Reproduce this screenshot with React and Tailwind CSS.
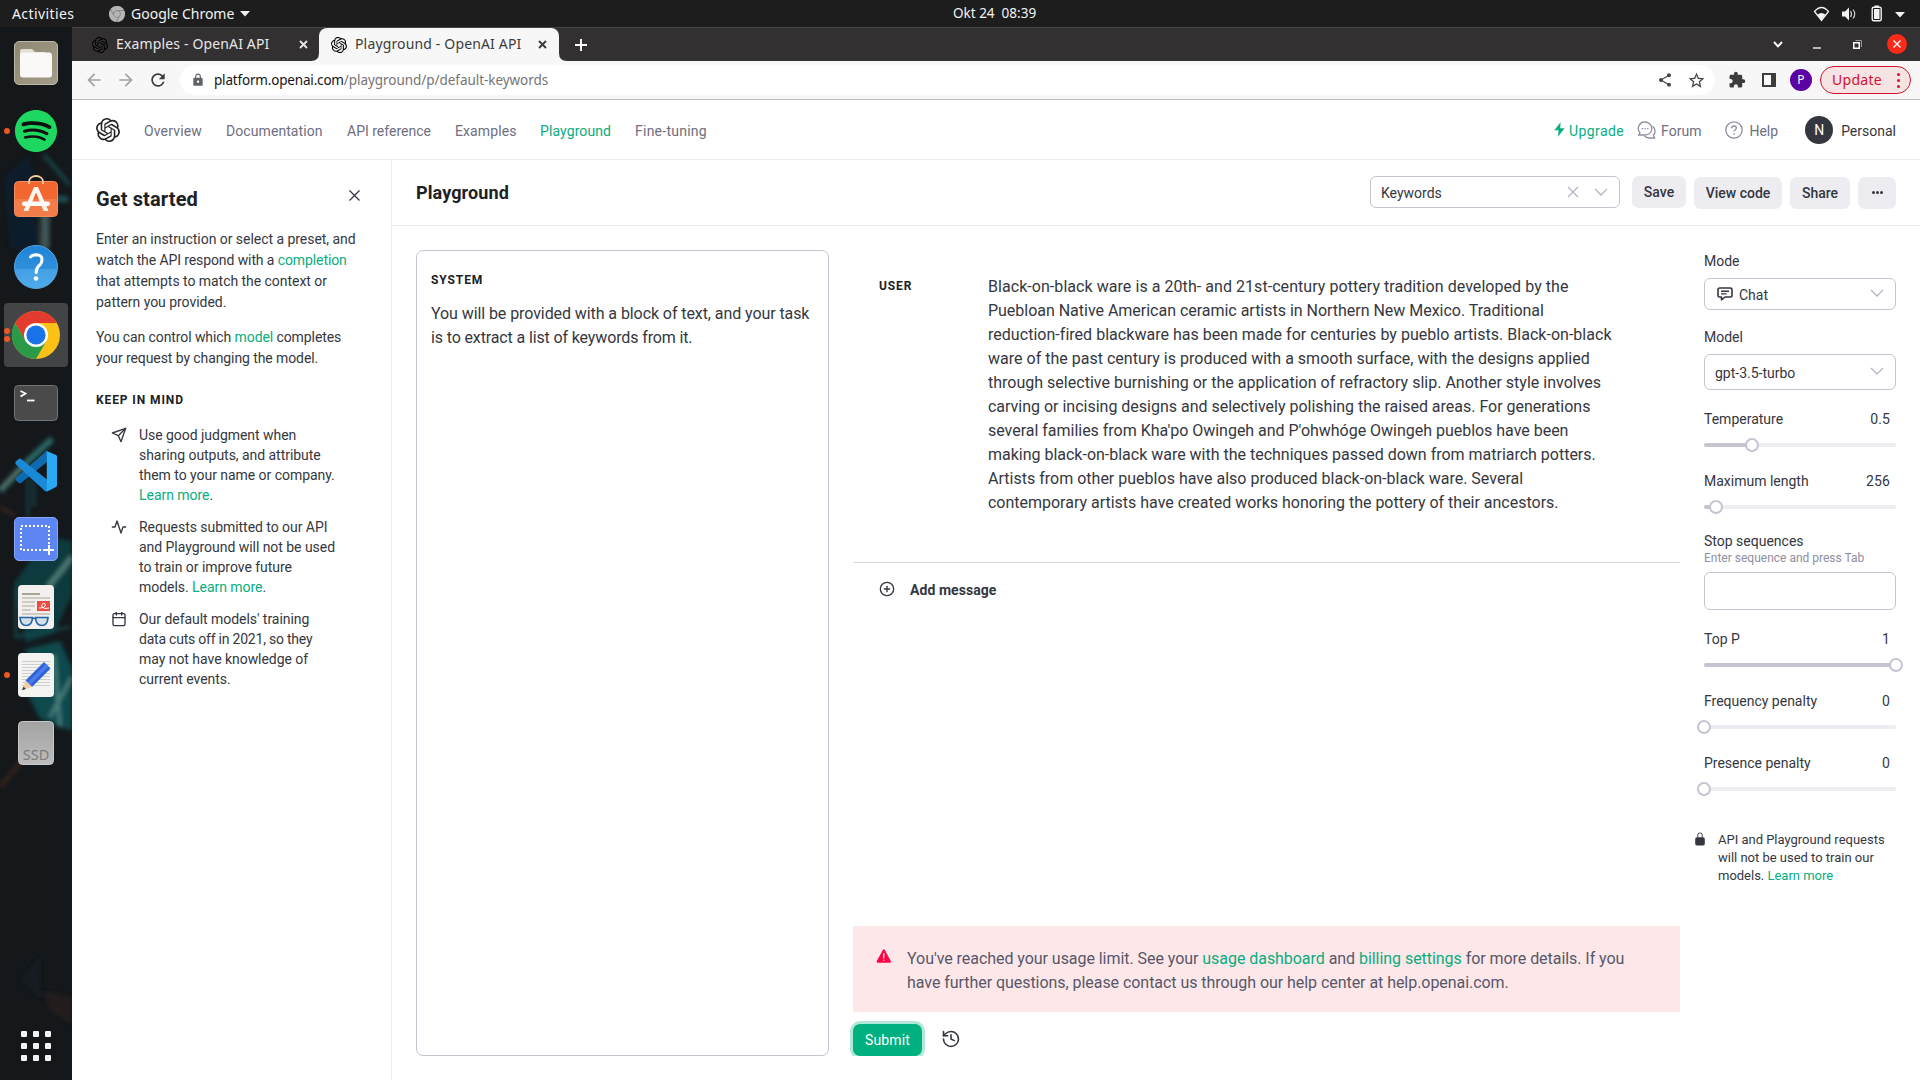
import React from "react";
import { SiOpenai, SiGooglechrome, SiSpotify } from "react-icons/si";
import { MdExtension, MdShare, MdStarBorder, MdLock, MdRefresh, MdArrowBack, MdArrowForward } from "react-icons/md";
import { FiSend, FiActivity, FiCalendar, FiPlusCircle } from "react-icons/fi";
import { IoWarning, IoLockClosed } from "react-icons/io5";
import { History } from "lucide-react";

function DockSlot({ dots = [], active = false, children }) {
  return (
    <svg width="72" height="64" viewBox="0 0 72 64" className="block shrink-0">
      {active && <rect x="4" y="0" width="64" height="64" rx="4" fill="#424446" />}
      {children}
      {dots.map((y) => (
        <circle key={y} cx="7" cy={y} r="3" fill="#ee5622" />
      ))}
    </svg>
  );
}

function Wallpaper() {
  return (
    <svg width="72" height="1053" viewBox="0 0 72 1053" className="absolute inset-0">
      <defs>
        <filter id="soft" x="-20%" y="-20%" width="140%" height="140%">
          <feGaussianBlur stdDeviation="2.2" />
        </filter>
      </defs>
      <rect width="72" height="1053" fill="#14181b" />
      <g filter="url(#soft)" fill="none">
        <path d="M44 128 L70 158" stroke="#1c4f52" strokeWidth="3" />
        <path d="M45 160 V222" stroke="#3f5754" strokeWidth="9" />
        <path d="M20 172 H68" stroke="#1c5356" strokeWidth="6" />
        <path d="M4 150 L30 128 L40 230 L10 220 Z" fill="#101f2a" />
        <path d="M0 464 L26 436 L52 412" stroke="#2a6a6a" strokeWidth="6" />
        <path d="M0 462 L24 438" stroke="#6d7a6c" strokeWidth="2" />
        <path d="M28 450 V490 M34 450 V480" stroke="#1d3f43" strokeWidth="3" />
        <path d="M14 556 L48 510 L72 514 L72 568 L54 606 L26 616 Z" fill="#0e3a3e" />
        <path d="M48 560 L72 530" stroke="#4f7d77" strokeWidth="5" />
        <path d="M16 560 V610 L70 600" stroke="#14565a" strokeWidth="2" />
        <path d="M26 622 L60 614 L72 640 L72 704 L40 692 L24 660 Z" fill="#0d4a4d" />
        <path d="M54 628 L60 700 M72 650 L50 690" stroke="#4b8580" strokeWidth="3" />
        <path d="M0 480 L14 488" stroke="#5b3028" strokeWidth="2" />
        <path d="M0 760 L50 700" stroke="#33201f" strokeWidth="5" />
        <path d="M20 952 L40 930 V972 Z" fill="#171b22" />
        <path d="M44 964 L72 970 V998 L50 984 Z" fill="#241b1d" />
      </g>
    </svg>
  );
}

function Dock() {
  return (
    <aside className="relative w-[72px] shrink-0 overflow-hidden bg-[#14181b]">
      <Wallpaper />
      <div className="relative flex h-full flex-col gap-1 pt-1">
        <DockSlot>
          <defs>
            <linearGradient id="files" x1="0" y1="0" x2="1" y2="1">
              <stop offset="0" stopColor="#8f8872" />
              <stop offset="1" stopColor="#a39c88" />
            </linearGradient>
          </defs>
          <rect x="14.5" y="10.5" width="43" height="43" rx="4.5" fill="url(#files)" stroke="#bdb7a6" />
          <path d="M20 20 q0-2 2-2 h10 l3 3 h10 v8 H20 Z" fill="#e3dfd3" />
          <rect x="20" y="21.5" width="32" height="25" rx="3" fill="#faf9f7" />
        </DockSlot>
        <DockSlot dots={[32]}>
          <circle cx="36" cy="32" r="20" fill="#0c1110" />
          <SiSpotify x="15" y="11" size={42} color="#1ed760" />
        </DockSlot>
        <DockSlot>
          <rect x="14.5" y="14.5" width="43" height="35" rx="4" fill="#f2662f" stroke="#f58b5f" />
          <path d="M15 32 h42 v14 q0 3-3 3 H18 q-3 0-3-3 Z" fill="#f47c48" />
          <path d="M29 17 v-2.500 a7 5.500 0 0 1 14 0 v2.500" fill="none" stroke="#f5cfa4" strokeWidth="1.800" />
          <path d="M34 20 h4 l10.500 24 h-4.800 L36 25.500 L28.300 44 h-4.800 Z" fill="#fdf4ee" />
          <rect x="22" y="34.500" width="28" height="4.500" rx="2.200" fill="#fff" />
        </DockSlot>
        <DockSlot>
          <defs>
            <linearGradient id="help" x1="0" y1="0" x2="0" y2="1">
              <stop offset="0" stopColor="#1f84d8" />
              <stop offset=".54" stopColor="#2f8fdc" />
              <stop offset=".55" stopColor="#44a0e4" />
              <stop offset="1" stopColor="#4fabea" />
            </linearGradient>
          </defs>
          <circle cx="36" cy="32" r="21.500" fill="url(#help)" stroke="#58a6e2" />
          <path d="M30.500 22 Q32 19.800 36.200 19.800 Q42.300 20 42 25 Q41.800 28.500 38.700 31 Q36.200 33 36.200 37.500" fill="none" stroke="#fff" strokeWidth="3" strokeLinecap="round" />
          <circle cx="36" cy="43.500" r="2.300" fill="#fff" />
        </DockSlot>
        <DockSlot dots={[28, 36]} active>
          <circle cx="36" cy="32" r="24" fill="#fbc116" />
          <path d="M36 20 H56.800 A24 24 0 0 0 15.200 20 L25.600 38 Z" fill="#e33b2e" />
          <path d="M15.200 20 A24 24 0 0 0 36 56 L46.400 38 L36 44 L25.600 38 Z" fill="#2a9a48" />
          <circle cx="36" cy="32" r="12" fill="#fff" />
          <circle cx="36" cy="32" r="9.600" fill="#1a73e8" />
        </DockSlot>
        <DockSlot>
          <rect x="14.500" y="14.500" width="43" height="35" rx="4" fill="#4a4a4a" stroke="#747474" />
          <path d="M20.500 20 L25.500 22.500 L20.500 25.500" fill="none" stroke="#fff" strokeWidth="1.800" />
          <path d="M27 29.500 h7.500" stroke="#fff" strokeWidth="1.800" />
        </DockSlot>
        <DockSlot>
          <path d="M15.500 41 L19 44 Q20 44.800 21 44 L47 23 V11.500 L15.800 39 Q15 40 15.500 41 Z" fill="#0f69ae" />
          <path d="M15.500 25 Q15 23 16 22.300 L19 19.800 Q20 19.200 21 20 L47 40.500 V52.500 L45 52 Z" fill="#1b8ad6" />
          <path d="M45.500 11.500 L56 16 Q57 16.500 57 18 V46 Q57 47.500 56 48 L46.500 52.800 Q46.800 52 46.800 50 V14 Q46.800 12 45.500 11.500 Z" fill="#2aaaf2" />
        </DockSlot>
        <DockSlot>
          <rect x="14.500" y="10.500" width="43" height="43" rx="4.500" fill="#5d86f2" stroke="#88a5f5" />
          <rect x="21" y="19" width="28" height="24" fill="none" stroke="#fff" strokeWidth="2" strokeDasharray="2 2" />
          <rect x="44" y="39" width="10" height="9" fill="#5d86f2" />
          <path d="M49 38 v10 M44 43 h10" stroke="#fff" strokeWidth="2" />
        </DockSlot>
        <DockSlot>
          <rect x="18" y="10" width="36" height="44" rx="4" fill="#f1f0ee" />
          <path d="M22 19 h18" stroke="#aaa594" strokeWidth="2" />
          <path d="M22 23 h28 M22 27 h13 M22 31 h13 M22 35 h9 M22 39 h28" stroke="#c3bfb4" strokeWidth="1.600" />
          <rect x="37" y="26" width="13" height="10" fill="#ec4c44" />
          <path d="M39 33 q6 0 6.500-3 q0-2-2-1.500 q-3 1-1.500 3.500 q2 2.500 7 1" fill="none" stroke="#fff" strokeWidth="1" />
          <g fill="#d3dfe9" stroke="#2765a4" strokeWidth="1.700">
            <path d="M20 42.500 h12.500 q-.3 8-6.500 8 q-5.500 0-6-8 Z" />
            <path d="M35.500 42.500 h12.500 q-.5 8-6 8 q-6.200 0-6.500-8 Z" />
            <path d="M32 44 q2-1.500 4 0" fill="none" />
          </g>
        </DockSlot>
        <DockSlot dots={[32]}>
          <rect x="18" y="10" width="36" height="44" rx="4" fill="#f3f3f2" />
          <path d="M22 18.500 h28 M22 21.500 h28 M22 24.500 h28 M22 27.500 h28 M22 30.500 h28 M22 33.500 h28 M22 36.500 h28 M22 39.500 h28 M22 42.500 h28" stroke="#cfcfcd" strokeWidth="1" />
          <path d="M44 19 L50.500 25.500 L32 44 L25.500 37.500 Z" fill="#2f62d8" />
          <path d="M46 21 L48.500 23.500 L30 42 L27.500 39.500 Z" fill="#4a7cec" />
          <path d="M25.500 37.500 L32 44 L22.500 47 Z" fill="#f3cfa5" />
          <path d="M23.500 43.500 L25.800 46 L22 47.200 Z" fill="#333" />
        </DockSlot>
        <DockSlot>
          <defs>
            <linearGradient id="ssd" x1="0" y1="0" x2="0" y2="1">
              <stop offset="0" stopColor="#a2a2a2" />
              <stop offset="1" stopColor="#bdbdbd" />
            </linearGradient>
          </defs>
          <rect x="18.500" y="10.500" width="35" height="43" rx="4" fill="url(#ssd)" stroke="#c9c9c9" />
          <text x="36" y="48.500" textAnchor="middle" fontSize="14.500" fill="#7c7c7c" fontFamily="'Noto Sans', sans-serif">SSD</text>
        </DockSlot>
        <div className="mt-auto mb-[19px] ml-[21px] grid w-[30px] grid-cols-3 gap-[6px]">
          {[0, 1, 2, 3, 4, 5, 6, 7, 8].map((i) => (
            <span key={i} className="size-[6px] rounded-[1px] bg-[#f2f2f0]" />
          ))}
        </div>
      </div>
    </aside>
  );
}

function SystemBar() {
  return (
    <div className="grid h-[27px] shrink-0 grid-cols-3 items-center bg-[#1d1d1d] font-['Noto_Sans',sans-serif] text-[14px] leading-none text-[#f2f2f2]">
      <div className="flex items-center pl-3">
        <span className="w-[97px] tracking-[0.4px]">Activities</span>
        <span className="flex size-[16px] items-center justify-center rounded-full bg-[#7d7d7d]">
          <SiGooglechrome className="size-4 text-[#b5b5b5]" />
        </span>
        <span className="ml-[6px]">Google Chrome</span>
        <svg width="10" height="6" viewBox="0 0 10 6" className="ml-[6px]"><path d="M0 0 H10 L5 5.500 Z" fill="#f2f2f2" /></svg>
      </div>
      <div className="pl-[313px] text-[13.5px] whitespace-pre">{"Okt 24  08:39"}</div>
      <div className="flex items-center justify-end pr-[15px]">
        <svg width="92" height="18" viewBox="0 0 92 18">
          <path d="M1.500 6.500 Q8.500 -1.500 15.500 6.500 L8.500 15.500 Z" fill="none" stroke="#f2f2f2" strokeWidth="1.300" />
          <path d="M4.500 9.500 Q8.500 6.500 12.500 9.500 L8.500 15.500 Z" fill="#f2f2f2" />
          <path d="M29 6.500 h3 l4-4 v13 l-4-4 h-3 Z" fill="#f2f2f2" />
          <path d="M37.500 6 q2 3 0 6 M40 4.500 q3.500 4.500 0 9" fill="none" stroke="#cfcfcf" strokeWidth="1.200" />
          <rect x="59.200" y="2.200" width="9" height="13.600" rx="1.500" fill="none" stroke="#f2f2f2" strokeWidth="1.400" />
          <rect x="61" y="4" width="5.500" height="10" fill="#f2f2f2" />
          <rect x="61.500" y="0.500" width="4.500" height="2" fill="#f2f2f2" />
          <path d="M82 7 h10 l-5 5.500 Z" fill="#f2f2f2" />
        </svg>
      </div>
    </div>
  );
}

function CloseGlyph({ className }) {
  return (
    <svg width="9" height="9" viewBox="0 0 9 9" className={className}>
      <path d="M1 1 L8 8 M8 1 L1 8" stroke="currentColor" strokeWidth="1.900" />
    </svg>
  );
}

function TabStrip() {
  return (
    <div className="flex h-[34px] border-t border-[#454344] bg-[#323031] font-['Noto_Sans',sans-serif] text-[14px] leading-none tracking-[0.15px]">
      <div className="flex w-[247px] items-center pl-5 text-[#e6e6e6]">
        <SiOpenai className="size-4 text-black" />
        <span className="ml-2 w-[183px] pb-px">Examples - OpenAI API</span>
        <CloseGlyph />
      </div>
      <div className="relative flex w-[240px] items-center rounded-t-[8px] bg-[#f7f7f7] pl-3 text-[#3c3c3c]">
        <svg width="8" height="8" viewBox="0 0 8 8" className="absolute bottom-0 -left-2"><path d="M8 0 V8 H0 Q8 8 8 0 Z" fill="#f7f7f7" /></svg>
        <svg width="8" height="8" viewBox="0 0 8 8" className="absolute -right-2 bottom-0"><path d="M0 0 V8 H8 Q0 8 0 0 Z" fill="#f7f7f7" /></svg>
        <SiOpenai className="size-4 text-black" />
        <span className="ml-2 w-[183px] pb-px">Playground - OpenAI API</span>
        <CloseGlyph />
      </div>
      <div className="flex flex-1 items-center justify-between pr-[13px] pl-4 text-white">
        <svg width="12" height="12" viewBox="0 0 12 12"><path d="M6 0 V12 M0 6 H12" stroke="currentColor" strokeWidth="1.900" /></svg>
        <div className="flex items-center">
          <svg width="10" height="7" viewBox="0 0 10 7" className="mr-[30px]"><path d="M1 1 L5 5.300 L9 1" fill="none" stroke="currentColor" strokeWidth="1.900" /></svg>
          <svg width="8" height="8" viewBox="0 0 8 8" className="mr-8"><path d="M0 7 H8" stroke="currentColor" strokeWidth="1.300" /></svg>
          <svg width="9" height="9" viewBox="0 0 9 9" className="mr-[25px]">
            <rect x="0.750" y="2.750" width="5.500" height="5.500" fill="none" stroke="currentColor" strokeWidth="1.500" />
            <path d="M2.500 0.500 H8.500 V7" fill="none" stroke="#9a9a9a" strokeWidth="1" />
          </svg>
          <span className="-mt-px flex size-5 items-center justify-center rounded-full bg-[#fc2a18]">
            <svg width="8" height="8" viewBox="0 0 8 8"><path d="M0.500 0.500 L7.500 7.500 M7.500 0.500 L0.500 7.500" stroke="#fff" strokeWidth="1.400" /></svg>
          </span>
        </div>
      </div>
    </div>
  );
}

function Toolbar() {
  return (
    <div className="flex h-[39px] items-center border-b border-[#bdbdbd] bg-[#f7f7f7] pr-[9px] pl-3 font-['Noto_Sans',sans-serif] leading-none">
      <MdArrowBack className="size-5 text-[#a3a3a3]" />
      <MdArrowForward className="ml-3 size-5 text-[#a3a3a3]" />
      <MdRefresh className="ml-3 size-5 text-[#3a3a3a]" />
      <div className="ml-3 flex h-[30px] w-[1535px] items-center rounded-full bg-white pr-[9px] pl-[11px] text-[13.5px]">
        <MdLock className="size-[14px] text-[#5f6368]" />
        <span className="ml-[9px] pt-px tracking-[-0.18px] text-[#161616]">platform.openai.com</span>
        <span className="pt-px tracking-[-0.05px] text-[#757575]">/playground/p/default-keywords</span>
        <MdShare className="ml-auto size-4 text-[#454545]" />
        <MdStarBorder className="ml-[14px] size-[19px] text-[#454545]" />
      </div>
      <MdExtension className="ml-[13px] size-[18px] text-[#3d3d3d]" />
      <svg width="14" height="14" viewBox="0 0 14 14" className="ml-4"><path d="M1 1 H13 V13 H1 Z" fill="none" stroke="#3d3d3d" strokeWidth="2" /><path d="M9 1 h4 v12 h-4 Z" fill="#3d3d3d" /></svg>
      <span className="ml-[14px] flex size-[22px] items-center justify-center rounded-full bg-[#5a02a6] text-[12px] text-white">P</span>
      <div className="ml-2 flex h-7 w-[91px] items-center rounded-full border border-[#d4112f] bg-[#f6e3e4] pl-[11px] text-[14px] text-[#d4112f]">
        <span className="tracking-[0.3px]">Update</span>
        <span className="mr-[10px] ml-auto flex flex-col gap-[3px]">
          <i className="size-[3px] rounded-full bg-current" />
          <i className="size-[3px] rounded-full bg-current" />
          <i className="size-[3px] rounded-full bg-current" />
        </span>
      </div>
    </div>
  );
}

function SiteNav() {
  return (
    <nav className="flex h-[60px] items-center border-b border-[#ececf1] px-6 text-[14px] leading-5 text-[#6e6e80]">
      <SiOpenai className="size-6 text-[#202123]" />
      <span className="ml-6 w-[82px] pt-[2px] tracking-[0.15px]">Overview</span>
      <span className="w-[121px] pt-[2px] tracking-[0.08px]">Documentation</span>
      <span className="w-[108px] pt-[2px]">API reference</span>
      <span className="w-[85px] pt-[2px] tracking-[0.1px]">Examples</span>
      <span className="w-[95px] pt-[2px] tracking-[0.1px] text-[#08ad7f]">Playground</span>
      <span className="pt-[2px] tracking-[0.25px]">Fine-tuning</span>
      <div className="ml-auto flex items-center">
        <svg width="11" height="15" viewBox="0 0 11 15" className="mr-1"><path d="M6.600 0.300 L0.400 8.300 H4.600 L4 14.700 L10.600 6.300 H6.200 Z" fill="#08ad7f" /></svg>
        <span className="pt-[3px] tracking-[0.4px] text-[#08ad7f]">Upgrade</span>
        <svg width="19" height="18" viewBox="0 0 19 18" className="ml-[13px]" fill="none" stroke="#8e8ea0" strokeWidth="1.300">
          <path d="M8 1 A6.800 6.500 0 1 1 8 14 H1.500 L3 11.800 A6.500 6.500 0 0 1 8 1 Z" strokeLinejoin="round" />
          <path d="M15.700 5.200 A6.500 6.500 0 0 1 16.400 14.500 L17.800 17 H12 A7 7 0 0 1 7.500 15" strokeLinejoin="round" />
          <path d="M4.700 7.600 h1.400 M7.400 7.600 h1.400 M10.100 7.600 h1.400" strokeWidth="1.400" />
        </svg>
        <span className="ml-[5px] pt-[3px]">Forum</span>
        <svg width="18" height="18" viewBox="0 0 18 18" className="ml-6" fill="none" stroke="#8e8ea0" strokeWidth="1.300">
          <circle cx="9" cy="9" r="8.200" />
          <path d="M6.700 7.200 Q6.800 5 9 5 Q11.300 5 11.300 7 Q11.300 8.200 10.100 8.800 Q9 9.300 9 10.600" />
          <circle cx="9" cy="12.900" r="0.500" fill="#8e8ea0" strokeWidth="0.700" />
        </svg>
        <span className="ml-[6px] pt-[3px]">Help</span>
        <span className="ml-[27px] flex size-7 items-center justify-center rounded-full bg-[#353740] text-[14px] text-white">N</span>
        <span className="ml-2 pt-[3px] text-[#353740]">Personal</span>
      </div>
    </nav>
  );
}

function Lines({ lines }) {
  return lines.map((line, i) => (
    <span key={i} className="block whitespace-nowrap">{line}</span>
  ));
}

const Link = ({ children }) => <span className="text-[#08ad7f]">{children}</span>;

function Tip({ icon: Icon, lines }) {
  return (
    <li className="flex pl-[15px]">
      <Icon className="mt-[2px] mr-3 size-4 shrink-0" strokeWidth={2} />
      <div><Lines lines={lines} /></div>
    </li>
  );
}

function Sidebar() {
  return (
    <section className="w-[320px] shrink-0 border-r border-[#ececf1] px-6 pt-[25px] text-[14px] leading-[21px] tracking-[-0.04px] text-[#353740]">
      <div className="flex items-start justify-between">
        <h2 className="text-[20px] leading-7 font-bold tracking-[0.13px] text-[#202123]">Get started</h2>
        <svg width="11" height="11" viewBox="0 0 11 11" className="mt-[5px] mr-[7px]"><path d="M0.500 0.500 L10.500 10.500 M10.500 0.500 L0.500 10.500" stroke="#353740" strokeWidth="1.300" /></svg>
      </div>
      <p className="mt-4">
        <Lines lines={["Enter an instruction or select a preset, and", <span className="tracking-[-0.1px]">watch the API respond with a <Link>completion</Link></span>, "that attempts to match the context or", "pattern you provided."]} />
      </p>
      <p className="mt-[14px] tracking-[-0.09px]">
        <Lines lines={[<>You can control which <Link>model</Link> completes</>, "your request by changing the model."]} />
      </p>
      <h3 className="mt-[23px] text-[12px] leading-4 font-bold tracking-[0.9px] text-[#202123]">KEEP IN MIND</h3>
      <ul className="mt-[17px] flex flex-col gap-3 leading-5">
        <Tip icon={FiSend} lines={["Use good judgment when", "sharing outputs, and attribute", "them to your name or company.", <><Link>Learn more</Link>.</>]} />
        <Tip icon={FiActivity} lines={["Requests submitted to our API", "and Playground will not be used", "to train or improve future", <>models. <Link>Learn more</Link>.</>]} />
        <Tip icon={FiCalendar} lines={["Our default models' training", <span className="tracking-[-0.22px]">data cuts off in 2021, so they</span>, "may not have knowledge of", "current events."]} />
      </ul>
    </section>
  );
}

function Chevron({ className }) {
  return (
    <svg width="14" height="8" viewBox="0 0 14 8" className={className}><path d="M1 1 L7 7 L13 1" fill="none" stroke="#b4b4c6" strokeWidth="1.300" /></svg>
  );
}

function PageHeader() {
  return (
    <header className="flex h-[66px] shrink-0 items-start border-b border-[#ececf1] px-6 text-[14px] text-[#353740]">
      <h1 className="mt-[21px] text-[18px] leading-6 font-bold tracking-[0.1px] text-[#202123]">Playground</h1>
      <div className="mt-4 ml-auto flex h-8 w-[250px] items-center rounded-[6px] border border-[#c5c5d2] pr-[11px] pl-[10px]">
        <span className="pt-[2px]">Keywords</span>
        <svg width="12" height="12" viewBox="0 0 12 12" className="mr-[15px] ml-auto"><path d="M1 1 L11 11 M11 1 L1 11" stroke="#b4b4c6" strokeWidth="1.300" /></svg>
        <Chevron />
      </div>
      <div className="mt-4 ml-3 flex gap-2 font-medium">
        <button className="h-8 w-[54px] rounded-[7px] bg-[#ececf1]">Save</button>
        <button className="mt-px h-8 w-[88px] rounded-[7px] bg-[#ececf1]">View code</button>
        <button className="mt-px h-8 w-[60px] rounded-[7px] bg-[#ececf1]">Share</button>
        <button className="mt-px flex h-8 w-[38px] items-center justify-center gap-px rounded-[7px] bg-[#ececf1] pb-[2px]">
          <i className="size-[3px] rounded-full bg-[#353740]" />
          <i className="size-[3px] rounded-full bg-[#353740]" />
          <i className="size-[3px] rounded-full bg-[#353740]" />
        </button>
      </div>
    </header>
  );
}

function Slider({ label, value, percent, className }) {
  return (
    <div className={className}>
      <div className="flex h-5 justify-between pr-[6px]">
        <span>{label}</span>
        <span className="tracking-[0.1px]">{value}</span>
      </div>
      <div className="relative mt-[14px] h-1 rounded-full bg-[#ececf1]">
        <div className="h-1 rounded-full bg-[#c5c5d2]" style={{ width: `${percent}%` }} />
        <span className="absolute -top-[5px] -ml-[7px] size-[14px] rounded-full border-2 border-[#c5c5d2] bg-white" style={{ left: `${percent}%` }} />
      </div>
    </div>
  );
}

function Settings() {
  return (
    <aside className="w-48 shrink-0 pt-px text-[14px] leading-5 text-[#353740]">
      <div>Mode</div>
      <div className="mt-[7px] flex h-8 items-center rounded-[6px] border border-[#c5c5d2] pr-[11px] pl-3">
        <svg width="16" height="14" viewBox="0 0 16 14" fill="none" stroke="#353740" strokeWidth="1.600" strokeLinejoin="round">
          <path d="M2.700 1 H13.300 Q15 1 15 2.700 V8.300 Q15 10 13.300 10 H8 L4.500 12.800 V10 H2.700 Q1 10 1 8.300 V2.700 Q1 1 2.700 1 Z" />
          <path d="M4 4.200 h8 M4 6.900 h5.500" strokeWidth="1.400" />
        </svg>
        <span className="ml-[6px] pt-[2px]">Chat</span>
        <Chevron className="-mt-[2px] ml-auto" />
      </div>
      <div className="mt-[17px]">Model</div>
      <div className="mt-[7px] flex h-9 items-center rounded-[6px] border border-[#c5c5d2] pr-[11px] pl-[10px]">
        <span className="pt-[2px]">gpt-3.5-turbo</span>
        <Chevron className="-mt-[2px] ml-auto" />
      </div>
      <Slider className="mt-[19px]" label="Temperature" value="0.5" percent={25} />
      <Slider className="mt-6" label="Maximum length" value="256" percent={6.2} />
      <div className="mt-[22px]">Stop sequences</div>
      <div className="-mt-px text-[12px] leading-4 text-[#8e8ea0]">Enter sequence and press Tab</div>
      <div className="mt-[6px] h-[38px] rounded-[6px] border border-[#c5c5d2]" />
      <Slider className="mt-[19px]" label="Top P" value="1" percent={100} />
      <Slider className="mt-6" label="Frequency penalty" value="0" percent={0} />
      <Slider className="mt-6" label="Presence penalty" value="0" percent={0} />
      <div className="mt-10 -ml-[11px] flex text-[13px] leading-[18px]">
        <IoLockClosed className="mt-px mr-[11px] size-[14px]" />
        <div className="tracking-[-0.01px]"><Lines lines={["API and Playground requests", "will not be used to train our", <>models. <Link>Learn more</Link></>]} /></div>
      </div>
    </aside>
  );
}

function Conversation() {
  return (
    <div className="flex w-[827px] shrink-0 flex-col text-[16px] leading-6 text-[#353740]">
      <div className="flex h-[313px] border-b border-[#d9d9e3] pt-[25px] pl-[26px]">
        <h3 className="mt-[3px] w-[109px] text-[12px] leading-4 font-bold tracking-[0.9px] text-[#202123]">USER</h3>
        <div className="tracking-[0.01px]">
          <Lines
            lines={[
              <span className="tracking-[0.055px]">Black-on-black ware is a 20th- and 21st-century pottery tradition developed by the</span>,
              <span className="tracking-[-0.02px]">Puebloan Native American ceramic artists in Northern New Mexico. Traditional</span>,
              <span className="tracking-[0.03px]">reduction-fired blackware has been made for centuries by pueblo artists. Black-on-black</span>,
              "ware of the past century is produced with a smooth surface, with the designs applied",
              "through selective burnishing or the application of refractory slip. Another style involves",
              <span className="tracking-[-0.01px]">carving or incising designs and selectively polishing the raised areas. For generations</span>,
              <span className="tracking-[-0.02px]">several families from Kha'po Owingeh and P'ohwhóge Owingeh pueblos have been</span>,
              <span className="tracking-[-0.01px]">making black-on-black ware with the techniques passed down from matriarch potters.</span>,
              "Artists from other pueblos have also produced black-on-black ware. Several",
              <span className="tracking-[-0.01px]">contemporary artists have created works honoring the pottery of their ancestors.</span>,
            ]}
          />
        </div>
      </div>
      <div className="mt-[14px] flex items-center pl-[26px] text-[14px] font-bold tracking-[0.06px]">
        <FiPlusCircle className="-mt-px mr-[15px] size-4" />
        <span className="pt-px">Add message</span>
      </div>
      <div className="mt-auto flex h-[86px] bg-[#fee7e9] pt-[21px] pl-[22px] tracking-[-0.05px] text-[#565869]">
        <IoWarning className="mr-[14px] size-[18px] text-[#fd0343]" />
        <div>
          <Lines
            lines={[
              <>You've reached your usage limit. See your <Link>usage dashboard</Link> and <Link>billing settings</Link> for more details. If you</>,
              "have further questions, please contact us through our help center at help.openai.com.",
            ]}
          />
        </div>
      </div>
      <div className="-mx-1 flex h-[44px] items-center overflow-hidden px-1 pt-3">
        <button className="h-8 w-[69px] rounded-[7px] bg-[#00b07f] text-[14px] tracking-[0.15px] text-white ring-3 ring-[#b3e7d9]">Submit</button>
        <History className="-mt-[2px] ml-[19px] size-5" strokeWidth={1.9} />
      </div>
    </div>
  );
}

export default function App() {
  return (
    <div className="flex h-[1080px] w-[1920px] flex-col overflow-hidden bg-white font-[Roboto,sans-serif]">
      <SystemBar />
      <div className="flex min-h-0 flex-1">
        <Dock />
        <div className="flex min-w-0 flex-1 flex-col">
          <TabStrip />
          <Toolbar />
          <SiteNav />
          <div className="flex min-h-0 flex-1">
            <Sidebar />
            <main className="flex min-w-0 flex-1 flex-col">
              <PageHeader />
              <div className="flex min-h-0 flex-1 gap-6 p-6">
                <section className="w-[413px] shrink-0 rounded-[7px] border border-[#c5c5d2] px-[15px] pt-[21px] text-[16px] leading-6 text-[#353740]">
                  <h3 className="-ml-px text-[12px] leading-4 font-bold tracking-[0.9px] text-[#202123]">SYSTEM</h3>
                  <p className="mt-[14px] -ml-px tracking-[-0.08px]">
                    <Lines lines={["You will be provided with a block of text, and your task", <span className="tracking-[-0.13px]">is to extract a list of keywords from it.</span>]} />
                  </p>
                </section>
                <Conversation />
                <Settings />
              </div>
            </main>
          </div>
        </div>
      </div>
    </div>
  );
}
